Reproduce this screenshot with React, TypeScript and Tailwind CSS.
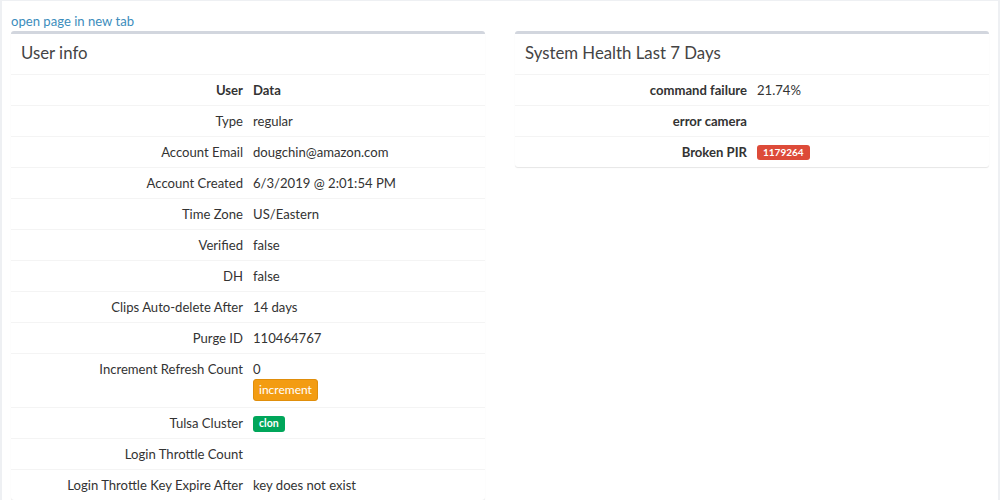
const userRows: { label: string; value?: React.ReactNode }[] = [
  { label: "Type", value: "regular" },
  { label: "Account Email", value: "dougchin@amazon.com" },
  { label: "Account Created", value: "6/3/2019 @ 2:01:54 PM" },
  { label: "Time Zone", value: "US/Eastern" },
  { label: "Verified", value: "false" },
  { label: "DH", value: "false" },
  { label: "Clips Auto-delete After", value: "14 days" },
  { label: "Purge ID", value: "110464767" },
  {
    label: "Increment Refresh Count",
    value: (
      <div className="pb-[1px]">
        <div>0</div>
        <button className="block rounded-[3px] border border-[#e08e0b] bg-[#f39c12] px-[5px] py-[1px] text-[12px] leading-[18px] text-white">
          increment
        </button>
      </div>
    ),
  },
  {
    label: "Tulsa Cluster",
    value: (
      <span className="inline-block rounded-[3px] bg-[#00a65a] px-[6px] pt-[2px] pb-[3px] align-[1px] text-[10.5px] font-bold leading-none text-white">
        clon
      </span>
    ),
  },
  { label: "Login Throttle Count" },
  { label: "Login Throttle Key Expire After", value: "key does not exist" },
];

const healthRows: { label: string; value?: React.ReactNode }[] = [
  { label: "command failure", value: "21.74%" },
  { label: "error camera" },
  {
    label: "Broken PIR",
    value: (
      <span className="inline-block rounded-[3px] bg-[#dd4b39] px-[6px] pt-[2px] pb-[3px] align-[1px] text-[10px] font-bold leading-none text-white">
        1179264
      </span>
    ),
  },
];

function Box({ title, children }: { title: string; children: React.ReactNode }) {
  return (
    <div className="rounded-[3px] border-t-[3px] border-[#d2d6de] bg-white shadow-[0_1px_1px_rgba(0,0,0,0.1)]">
      <div className="px-[10px] pt-[9px] pb-[11px] text-[16.8px] leading-[20px] text-[#444]">{title}</div>
      {children}
    </div>
  );
}

function Row({ label, value, bold }: { label: string; value?: React.ReactNode; bold?: boolean }) {
  return (
    <div className="grid grid-cols-2 border-t border-[#f4f4f4]">
      <div className={`p-[5px] text-right ${bold ? "font-bold" : ""}`}>{label}</div>
      <div className="p-[5px]">{value}</div>
    </div>
  );
}

export default function App() {
  return (
    <div
      className="h-[500px] w-[1000px] overflow-hidden border-x-2 border-t border-[#eef0f3] bg-white text-[13.1px] leading-[20px] text-[#333]"
      style={{ fontFamily: "Lato, 'Liberation Sans', sans-serif" }}
    >
      <div className="px-[9px] pt-[10px]">
        <a className="text-[#3c8dbc]">open page in new tab</a>
      </div>
      <div className="flex gap-[30px] px-[9px]">
        <div className="w-[474px]">
          <Box title="User info">
            <div className="grid grid-cols-2 border-t border-[#f4f4f4] font-bold">
              <div className="p-[5px] text-right">User</div>
              <div className="p-[5px]">Data</div>
            </div>
            {userRows.map((r) => (
              <Row key={r.label} label={r.label} value={r.value} />
            ))}
          </Box>
        </div>
        <div className="w-[474px]">
          <Box title="System Health Last 7 Days">
            {healthRows.map((r) => (
              <Row key={r.label} label={r.label} value={r.value} bold />
            ))}
          </Box>
        </div>
      </div>
    </div>
  );
}
